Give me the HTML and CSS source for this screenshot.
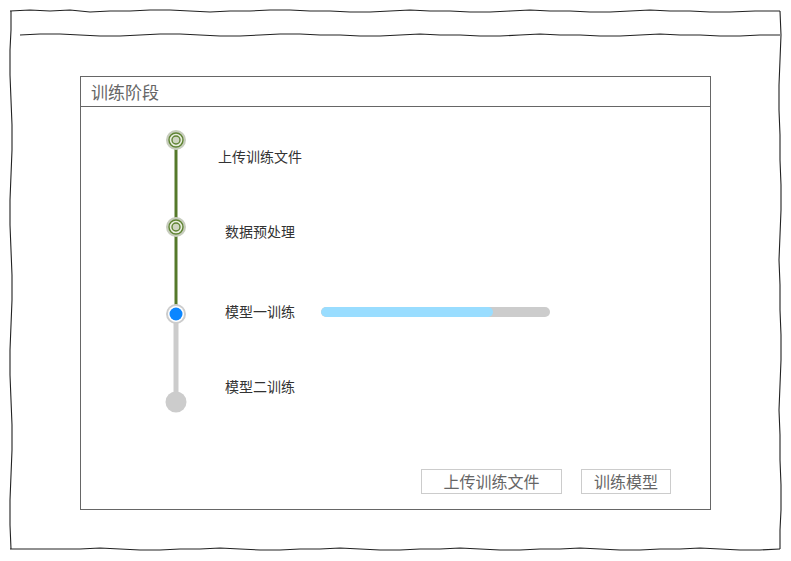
FILE: index.html
```html
<!DOCTYPE html>
<html lang="zh">
<head>
<meta charset="utf-8">
<title>训练阶段</title>
<link rel="stylesheet" href="styles.css">
</head>
<body>
<div class="frame">
  <svg class="sketch" width="791" height="561" viewBox="0 0 791 561" aria-hidden="true">
    <polyline points="10,11 30,10 50,11 70,10 90,12 110,11 130,11 150,10 170,10 190,11 210,12 230,11 250,11 270,10 290,10 310,11 330,11 350,12 370,12 390,11 410,10 430,11 450,11 470,12 490,12 510,11 530,10 550,11 570,11 590,12 610,12 630,11 650,10 670,11 690,11 710,12 730,12 755,11 780,11" />
    <polyline points="780,11 781,35 780,60 779,85 779,110 780,135 780,160 781,185 781,210 780,235 779,260 780,285 780,310 781,335 781,360 780,385 779,410 780,435 780,460 781,485 781,510 780,530 780,549" />
    <polyline points="780,549 760,550 740,550 720,549 700,548 680,549 660,549 640,550 620,550 600,549 580,548 560,549 540,549 520,550 500,550 480,549 460,548 440,549 420,549 400,550 380,550 360,549 340,548 320,549 300,549 280,550 260,550 240,549 220,548 200,549 180,549 160,550 140,550 120,549 100,548 80,549 60,549 35,549 10,549" />
    <polyline points="11,549 10,525 10,500 11,475 12,450 12,425 11,400 10,375 10,350 11,325 12,300 12,275 11,250 10,225 10,200 11,175 12,150 12,125 11,100 10,75 10,50 11,30 11,11" />
    <polyline points="20,35 40,34 60,34 80,35 100,36 120,36 140,35 160,34 180,34 200,35 220,36 240,36 260,35 280,34 300,34 320,35 340,35 360,36 380,36 400,35 420,34 440,35 460,35 480,36 500,36 520,35 540,34 560,35 580,35 600,36 620,36 640,35 660,34 680,35 700,35 720,36 740,36 760,35 780,35" />
  </svg>
  <section class="panel">
    <header class="panel-head">训练阶段</header>
    <div class="panel-body">
      <svg class="track" width="24" height="290" viewBox="0 0 24 290" aria-hidden="true">
        <line x1="12" y1="12" x2="12" y2="186" class="line-done" />
        <line x1="12" y1="186" x2="12" y2="274" class="line-todo" />
        <g class="node-done">
          <circle cx="12" cy="12" r="10" class="o" />
          <circle cx="12" cy="12" r="7" class="m" />
          <circle cx="12" cy="12" r="4" class="i" />
        </g>
        <g class="node-done">
          <circle cx="12" cy="99" r="10" class="o" />
          <circle cx="12" cy="99" r="7" class="m" />
          <circle cx="12" cy="99" r="4" class="i" />
        </g>
        <circle cx="12" cy="186" r="10" fill="#cccccc" />
        <circle cx="12" cy="186" r="8" fill="#ffffff" />
        <circle cx="12" cy="186" r="6.5" fill="#0b86ff" />
        <circle cx="12" cy="274" r="10.5" fill="#cccccc" />
      </svg>
      <ol class="steps">
        <li class="step s1"><span class="label">上传训练文件</span></li>
        <li class="step s2"><span class="label">数据预处理</span></li>
        <li class="step s3"><span class="label">模型一训练</span><div class="bar"><div class="fill" style="width:75%"></div></div></li>
        <li class="step s4"><span class="label">模型二训练</span></li>
      </ol>
    </div>
    <footer class="panel-foot">
      <button class="btn btn-wide">上传训练文件</button>
      <button class="btn btn-narrow">训练模型</button>
    </footer>
  </section>
</div>
</body>
</html>
```

FILE: styles.css
```css
* { box-sizing: border-box; }
html, body { margin: 0; padding: 0; background: #fff; }
body {
  font-family: "Noto Sans CJK SC", "Liberation Sans", sans-serif;
  color: #333;
}
.frame {
  position: relative;
  width: 791px;
  height: 561px;
  padding: 76px 0 0 80px;
}
.sketch {
  position: absolute;
  left: 0;
  top: 0;
  pointer-events: none;
}
.sketch polyline {
  fill: none;
  stroke: #222;
  stroke-width: 1.1;
  stroke-linejoin: round;
}
.panel {
  width: 631px;
  height: 434px;
  border: 1px solid #666;
  display: flex;
  flex-direction: column;
}
.panel-head {
  height: 30px;
  border-bottom: 1px solid #666;
  padding-left: 10px;
  font-size: 17px;
  line-height: 29px;
  color: #666;
}
.panel-body {
  flex: 1;
  display: flex;
  align-items: flex-start;
  padding: 21px 0 0 83px;
}
.track { display: block; flex: none; }
.line-done { stroke: #55792a; stroke-width: 3; }
.line-todo { stroke: #cccccc; stroke-width: 5; }
.node-done .o { fill: #c7cdbd; }
.node-done .m { fill: #e9eddf; stroke: #5f8433; stroke-width: 1.4; }
.node-done .i { fill: #cfd5c2; stroke: #5f8433; stroke-width: 1.4; }
.steps {
  list-style: none;
  margin: 0 0 0 22px;
  padding: 0;
}
.step {
  display: flex;
  align-items: center;
  height: 18px;
}
.s1 { margin-top: 19px; }
.s2 { margin-top: 57px; }
.s3 { margin-top: 62px; }
.s4 { margin-top: 57px; }
.label {
  width: 100px;
  text-align: center;
  font-size: 14px;
  line-height: 18px;
  color: #333;
}
.bar {
  margin-left: 11px;
  width: 229px;
  height: 10px;
  border-radius: 5px;
  background: #cccccc;
  overflow: hidden;
}
.fill {
  height: 100%;
  background: #99ddff;
  border-radius: 5px;
}
.step.s3 .bar { margin-top: 1px; }
.panel-foot {
  display: flex;
  justify-content: flex-end;
  gap: 19px;
  padding: 0 39px 15px 0;
}
.btn {
  height: 25px;
  border: 1px solid #ccc;
  background: #fff;
  color: #666;
  font-family: inherit;
  font-size: 16px;
  line-height: 23px;
  padding: 0;
}
.btn-wide { width: 141px; }
.btn-narrow { width: 90px; }
```
